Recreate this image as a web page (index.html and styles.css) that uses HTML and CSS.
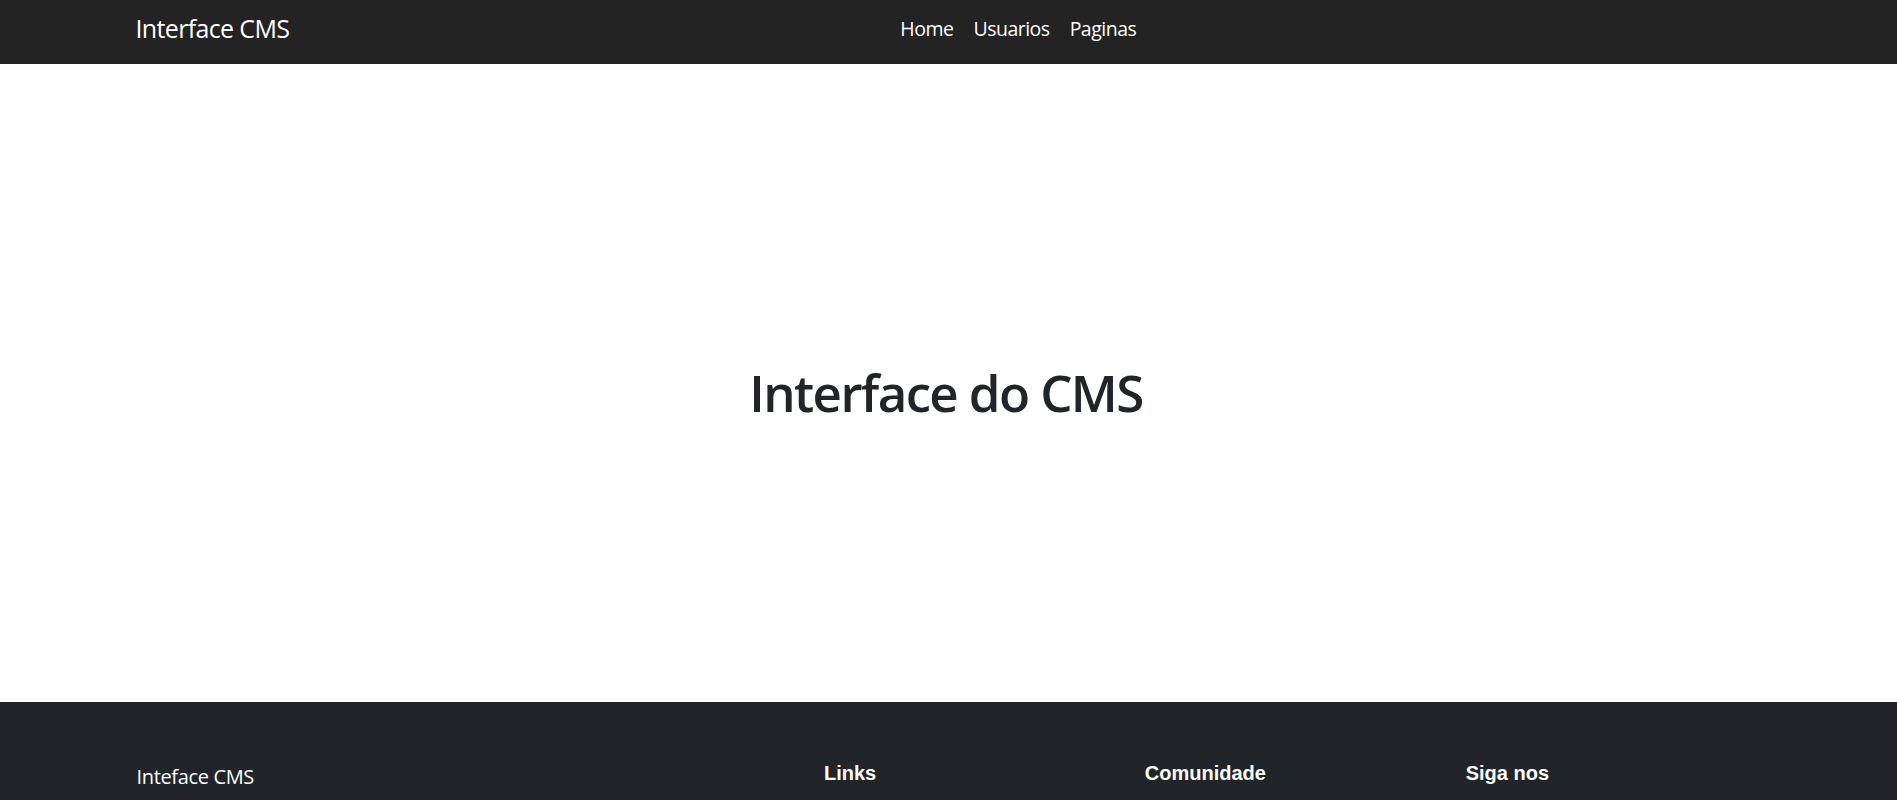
FILE: index.html
```html
<!DOCTYPE html>
<html lang="pt">
<head>
<meta charset="utf-8">
<title>Interface CMS</title>
<link rel="stylesheet" href="styles.css">
</head>
<body>
<header class="navbar">
  <div class="container nav-inner">
    <a class="brand" href="#">Interface CMS</a>
    <ul class="nav-links">
      <li><a href="#">Home</a></li>
      <li><a href="#">Usuarios</a></li>
      <li><a href="#">Paginas</a></li>
    </ul>
  </div>
</header>
<main class="hero">
  <h1 class="hero-title">Interface do CMS</h1>
</main>
<footer class="footer">
  <div class="footer-grid">
    <div class="footer-col">
      <p class="footer-brand">Inteface CMS</p>
    </div>
    <div class="footer-col">
      <h5 class="footer-heading">Links</h5>
    </div>
    <div class="footer-col">
      <h5 class="footer-heading">Comunidade</h5>
    </div>
    <div class="footer-col">
      <h5 class="footer-heading">Siga nos</h5>
    </div>
  </div>
</footer>
</body>
</html>
```

FILE: styles.css
```css
* { box-sizing: border-box; }
html, body { margin: 0; padding: 0; }
body {
  font-family: "Open Sans", "Noto Sans", sans-serif;
  color: #212529;
  background: #ffffff;
}
a { text-decoration: none; color: inherit; }
.container {
  width: 1650px;
  margin: 0 auto;
  padding: 0 18px 0 12px;
}
.navbar {
  background: #232323;
  height: 64px;
  padding-bottom: 6px;
  display: flex;
  align-items: center;
}
.nav-inner {
  display: flex;
  align-items: center;
}
.brand {
  color: #ffffff;
  font-size: 25px;
  letter-spacing: -0.65px;
  margin-right: 20px;
  line-height: 1.5;
}
.nav-links {
  list-style: none;
  display: flex;
  margin: 0 0 0 581px;
  padding: 0;
}
.nav-links a {
  display: block;
  color: #ffffff;
  font-size: 19.5px;
  letter-spacing: -0.5px;
  padding: 10px 10px;
  line-height: 1.5;
}
.hero {
  height: 638px;
  padding: 20px 5px 0 0;
  display: flex;
  align-items: center;
  justify-content: center;
}
.hero-title {
  margin: 0;
  font-size: 51px;
  font-weight: 600;
  letter-spacing: -1.6px;
  line-height: 1.2;
  color: #212529;
}
.footer {
  background: #212529;
  color: #ffffff;
  padding-top: 59px;
  height: 120px;
}
.footer-grid {
  width: 1650px;
  margin: 0 auto;
  display: grid;
  grid-template-columns: 41.6667% repeat(3, 1fr);
}
.footer-col { padding: 0 17px 0 13px; }
.footer-brand {
  margin: 1px 0 0;
  font-size: 20px;
  letter-spacing: -0.35px;
  line-height: 1.5;
}
.footer-heading {
  margin: 0;
  font-family: "Liberation Sans", Arial, sans-serif;
  font-weight: 700;
  font-size: 20px;
  line-height: 1.2;
}
```
